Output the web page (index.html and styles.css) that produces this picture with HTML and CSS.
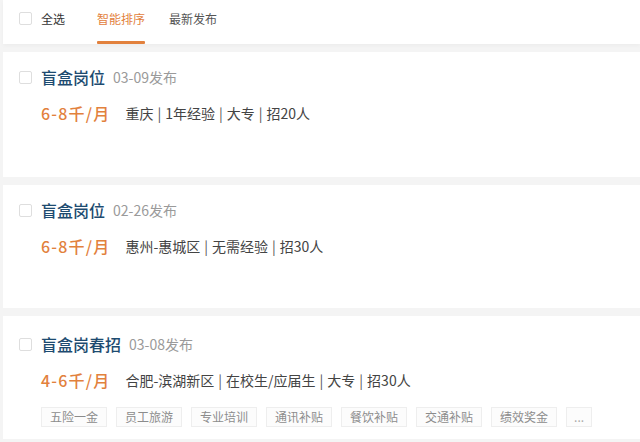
FILE: index.html
```html
<!DOCTYPE html>
<html lang="zh">
<head>
<meta charset="utf-8">
<link rel="stylesheet" href="styles.css">
</head>
<body>
<div class="page">
  <div class="topbar">
    <label class="selall"><span class="cb"></span><span>全选</span></label>
    <span class="tab active">智能排序</span>
    <span class="tab">最新发布</span>
  </div>

  <div class="card">
    <div class="row-title"><span class="cb"></span><span class="title">盲盒岗位</span><span class="date">03-09发布</span></div>
    <div class="row-info"><span class="salary">6-8千/月</span><span class="info">重庆<span class="sep">|</span>1年经验<span class="sep">|</span>大专<span class="sep">|</span>招20人</span></div>
  </div>

  <div class="card">
    <div class="row-title"><span class="cb"></span><span class="title">盲盒岗位</span><span class="date">02-26发布</span></div>
    <div class="row-info"><span class="salary">6-8千/月</span><span class="info">惠州-惠城区<span class="sep">|</span>无需经验<span class="sep">|</span>招30人</span></div>
  </div>

  <div class="card card-last">
    <div class="row-title"><span class="cb"></span><span class="title">盲盒岗春招</span><span class="date">03-08发布</span></div>
    <div class="row-info"><span class="salary">4-6千/月</span><span class="info">合肥-滨湖新区<span class="sep">|</span>在校生/应届生<span class="sep">|</span>大专<span class="sep">|</span>招30人</span></div>
    <div class="tags">
      <span class="tag">五险一金</span>
      <span class="tag">员工旅游</span>
      <span class="tag">专业培训</span>
      <span class="tag">通讯补贴</span>
      <span class="tag">餐饮补贴</span>
      <span class="tag">交通补贴</span>
      <span class="tag">绩效奖金</span>
      <span class="tag more">...</span>
    </div>
  </div>
</div>
</body>
</html>
```

FILE: styles.css
```css
* { box-sizing: border-box; }
html, body { margin: 0; padding: 0; }
body {
  background: #f4f4f4;
  font-family: "Noto Sans CJK SC", "Noto Sans", sans-serif;
  width: 640px;
  height: 442px;
  overflow: hidden;
}
.page {
  display: flex;
  flex-direction: column;
  gap: 8px;
}
.topbar {
  height: 44px;
  background: #fff;
  display: flex;
  align-items: stretch;
  padding-left: 19px;
  margin-left: 3px;
  box-shadow: 0 2px 4px rgba(0,0,0,0.03);
}
.cb {
  display: inline-block;
  width: 13px;
  height: 13px;
  border: 1px solid #dedede;
  border-radius: 2px;
  background: #fff;
  flex: none;
}
.selall {
  display: flex;
  align-items: center;
  gap: 9px;
  font-size: 12px;
  color: #333;
  padding-bottom: 7px;
  margin-left: -3px;
}
.tab {
  display: flex;
  align-items: center;
  font-size: 12px;
  color: #555;
  padding-bottom: 7px;
  margin-left: 32px;
  position: relative;
}
.tab + .tab { margin-left: 24px; }
.tab.active { color: #e2813d; }
.tab.active::after {
  content: "";
  position: absolute;
  left: 0;
  right: 0;
  bottom: 0;
  height: 3px;
  background: #e2813d;
  border-radius: 1px;
}
.card {
  background: #fff;
  margin-left: 3px;
  height: 125px;
  padding: 15px 0 0 16px;
  display: flex;
  flex-direction: column;
}
.card + .card { height: 123px; }
.card-last { height: 140px; padding-top: 18px; }
.row-title {
  display: flex;
  align-items: center;
  height: 20px;
}
.row-title .cb { margin-right: 9px; }
.title {
  font-size: 16px;
  color: #1d4b70;
  font-weight: 500;
}
.date {
  font-size: 14px;
  color: #9a9a9a;
  margin-left: 8px;
}
.row-info {
  display: flex;
  align-items: center;
  height: 20px;
  margin-top: 16px;
  padding-left: 22px;
}
.salary {
  font-size: 16px;
  color: #e2813d;
  font-weight: 500;
  letter-spacing: 1.2px;
}
.info {
  font-size: 14px;
  color: #444;
  margin-left: 15px;
}
.sep {
  margin: 0 4px;
  color: #555;
}
.tags {
  display: flex;
  gap: 9px;
  margin-top: 17px;
  padding-left: 22px;
}
.tag {
  font-size: 12px;
  color: #8c8c8c;
  border: 1px solid #eeeeee;
  background: #fcfcfc;
  height: 20px;
  line-height: 18px;
  padding: 0 8px;
}
.tag.more { padding: 0 7px; color: #aaa; }
```
